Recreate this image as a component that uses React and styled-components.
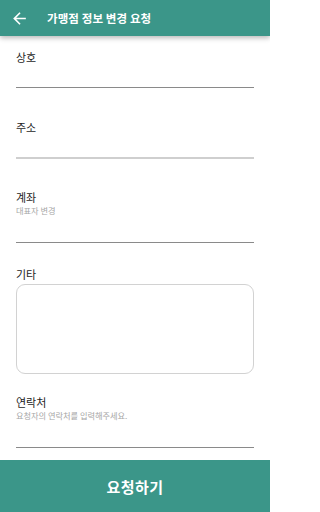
import styled, {createGlobalStyle} from "styled-components";

const GlobalStyle = createGlobalStyle`
  html, body {
    margin: 0;
    padding: 0;
    background: #ffffff;
  }
  body {
    font-family: "Noto Sans CJK KR", "Noto Sans", sans-serif;
  }
  * {
    box-sizing: border-box;
  }
`

const TEAL = "#3b9689"

const Page = styled.div`
  width: 270px;
  height: 512px;
  display: flex;
  flex-direction: column;
  overflow: hidden;
  background: #fff;
`

const Header = styled.header`
  height: 36px;
  flex-shrink: 0;
  display: flex;
  align-items: center;
  padding-left: 10px;
  background: ${TEAL};
  box-shadow: 0 2px 5px rgba(0, 0, 0, 0.28);
  position: relative;
  z-index: 1;
`

const BackButton = styled.button`
  display: flex;
  align-items: center;
  justify-content: center;
  width: 19px;
  height: 19px;
  padding: 0;
  border: none;
  background: none;
  color: #fff;
`

const Title = styled.h1`
  margin: 0 0 0 18px;
  font-size: 11.5px;
  font-weight: 700;
  color: #fff;
  letter-spacing: 0.1px;
`

const Form = styled.div`
  flex: 1;
  padding: 0 16px;
  display: flex;
  flex-direction: column;
`

const Field = styled.div`
  display: flex;
  flex-direction: column;
  margin-top: ${p => p.$top}px;
`

const Label = styled.label`
  font-size: 11px;
  line-height: 16px;
  color: #1e1e1e;
`

const Hint = styled.span`
  font-size: 8.2px;
  line-height: 12px;
  color: #a6a6a6;
  margin-top: -1px;
`

const Input = styled.input`
  height: ${p => p.$h}px;
  border: none;
  border-bottom: 1px solid ${p => (p.$light ? "#cfcfcf" : "#8a8a8a")};
  border-bottom-width: ${p => (p.$light ? 2 : 1)}px;
  padding: 0;
  outline: none;
  font-family: inherit;
  font-size: 11px;
  background: transparent;
`

const TextArea = styled.textarea`
  height: 90px;
  margin-top: 2px;
  border: 1px solid #d2d2d2;
  border-radius: 9px;
  resize: none;
  outline: none;
  padding: 6px 8px;
  font-family: inherit;
  font-size: 11px;
`

const SubmitButton = styled.button`
  height: 52px;
  flex-shrink: 0;
  border: none;
  background: ${TEAL};
  color: #fff;
  font-family: inherit;
  font-size: 15px;
  font-weight: 700;
  letter-spacing: 0.5px;
`

const ArrowIcon = () => (
  <svg width="19" height="19" viewBox="0 0 24 24" fill="currentColor">
    <path d="M20 11H7.83l5.59-5.59L12 4l-8 8 8 8 1.41-1.41L7.83 13H20v-2z"/>
  </svg>
)

const App = () => {
  return (
    <Page>
      <GlobalStyle/>
      <Header>
        <BackButton aria-label="back">
          <ArrowIcon/>
        </BackButton>
        <Title>가맹점 정보 변경 요청</Title>
      </Header>
      <Form>
        <Field $top={13}>
          <Label>상호</Label>
          <Input $h={23}/>
        </Field>
        <Field $top={31}>
          <Label>주소</Label>
          <Input $h={24} $light/>
        </Field>
        <Field $top={30}>
          <Label>계좌</Label>
          <Hint>대표자 변경</Hint>
          <Input $h={27}/>
        </Field>
        <Field $top={23}>
          <Label>기타</Label>
          <TextArea/>
        </Field>
        <Field $top={20}>
          <Label>연락처</Label>
          <Hint>요청자의 연락처를 입력해주세요.</Hint>
          <Input $h={27}/>
        </Field>
      </Form>
      <SubmitButton>요청하기</SubmitButton>
    </Page>
  )
}

export default App
